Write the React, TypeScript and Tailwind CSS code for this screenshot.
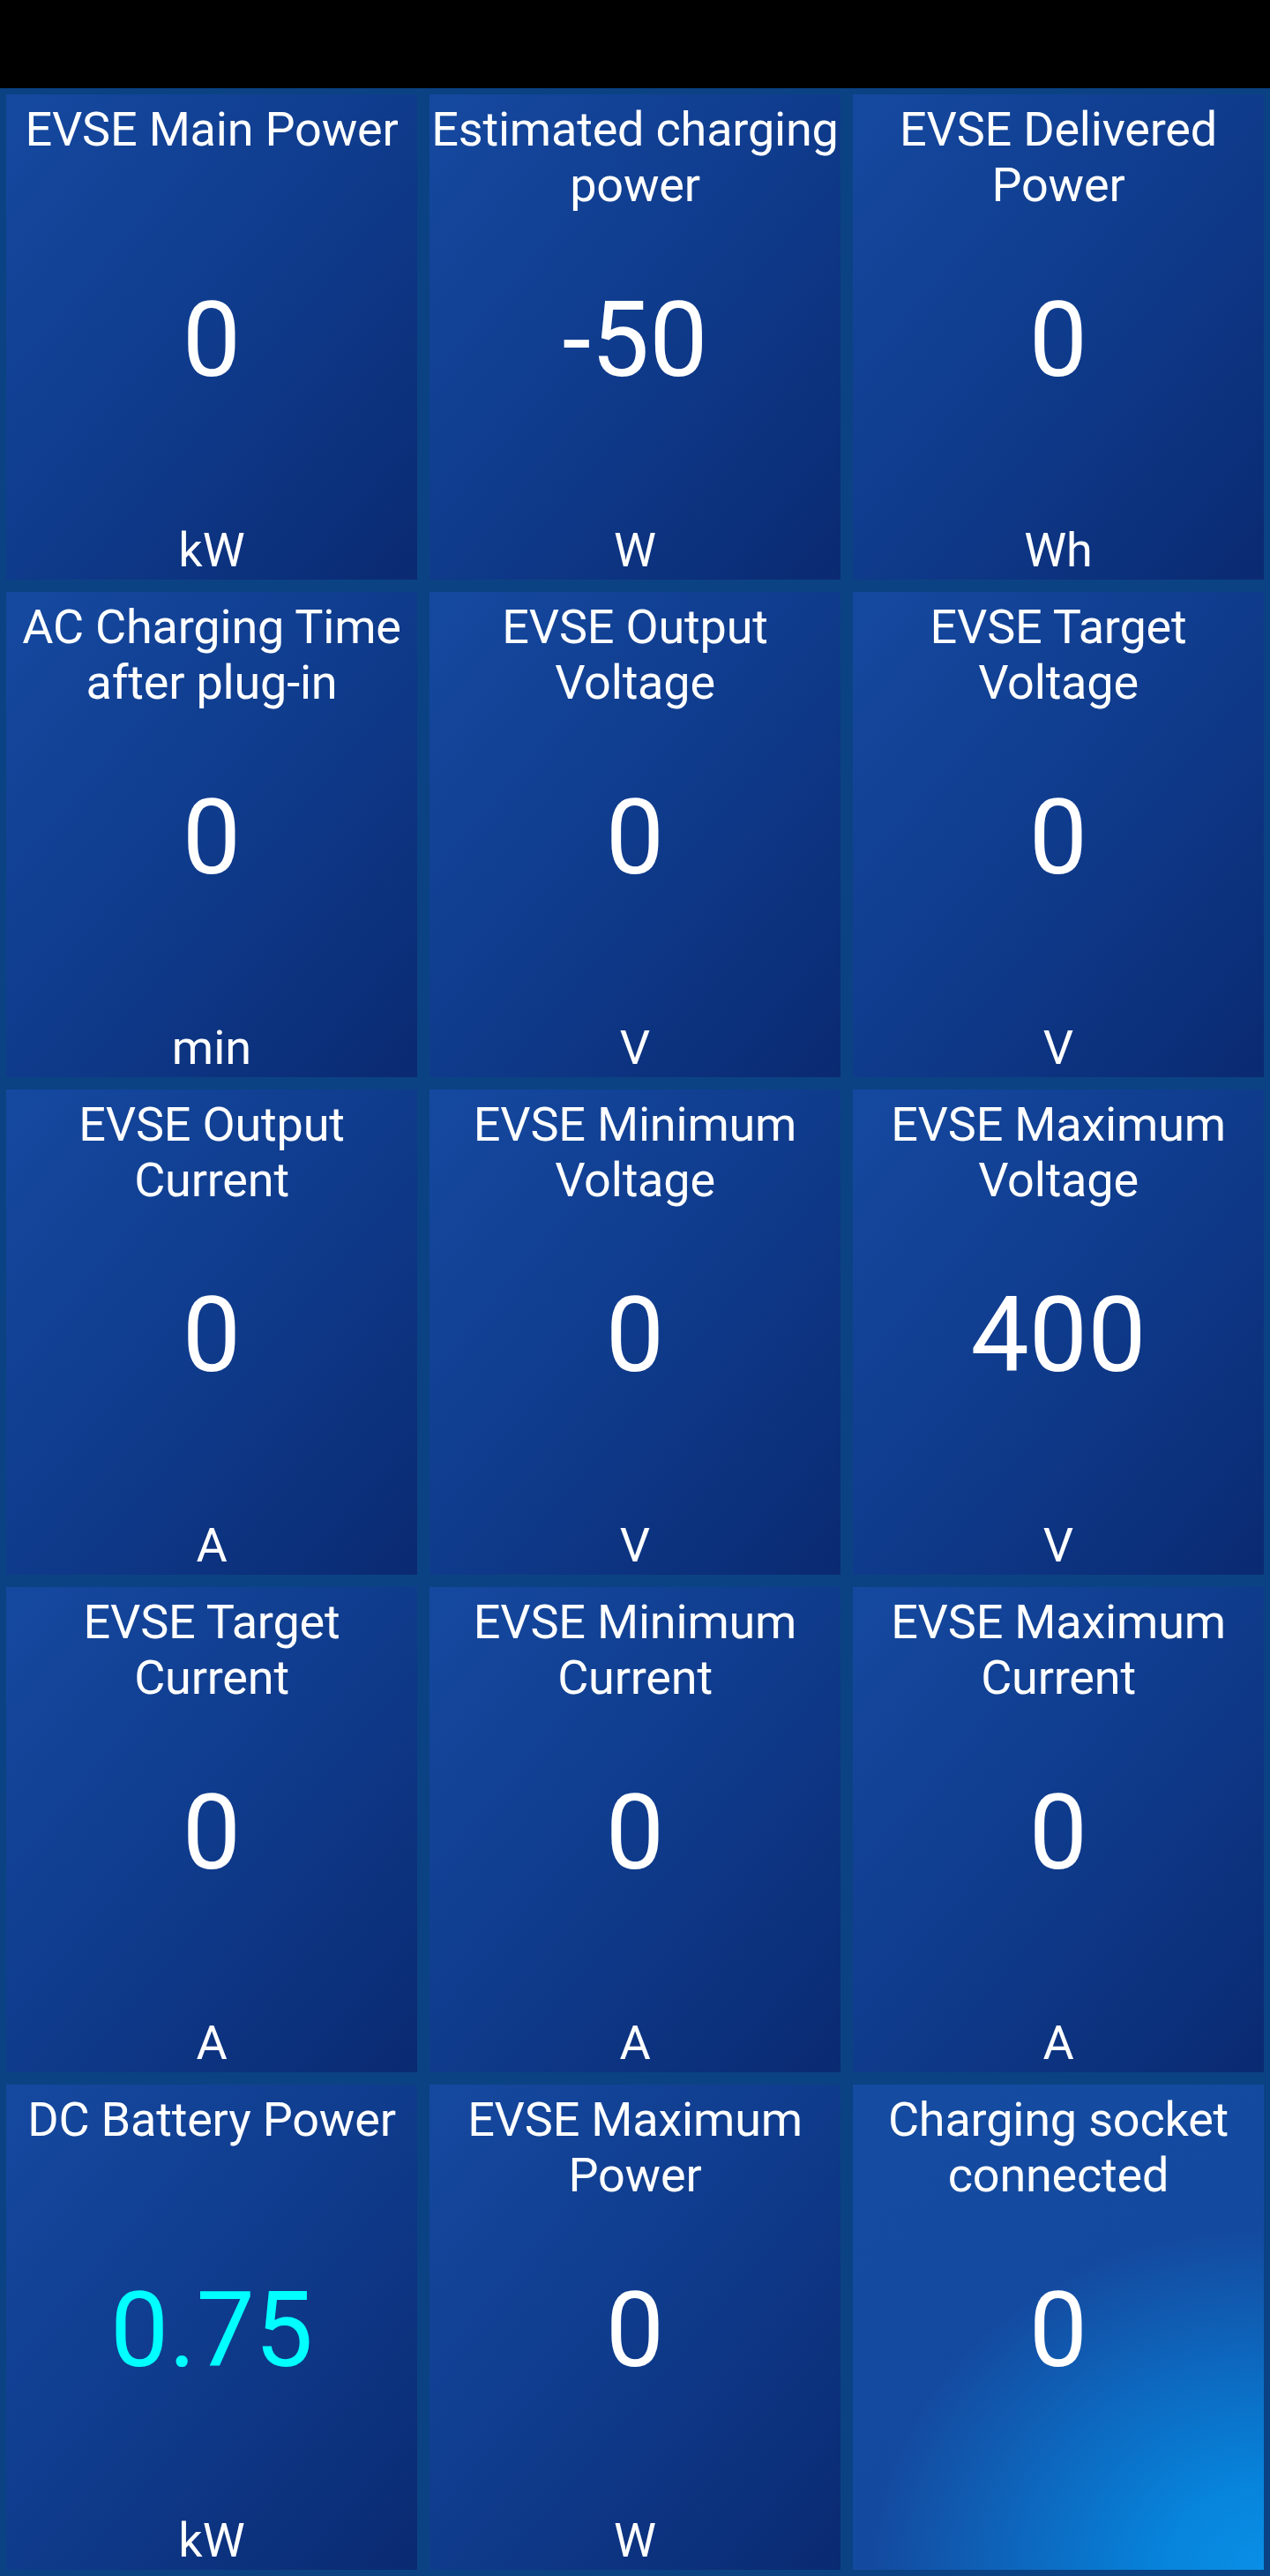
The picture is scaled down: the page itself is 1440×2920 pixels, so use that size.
import React from "react";

type Tile = { title: string; value: string; unit: string; cyan?: boolean; glow?: boolean };

const tiles: Tile[] = [
  { title: "EVSE Main Power", value: "0", unit: "kW" },
  { title: "Estimated charging power", value: "-50", unit: "W" },
  { title: "EVSE Delivered Power", value: "0", unit: "Wh" },
  { title: "AC Charging Time after plug-in", value: "0", unit: "min" },
  { title: "EVSE Output Voltage", value: "0", unit: "V" },
  { title: "EVSE Target Voltage", value: "0", unit: "V" },
  { title: "EVSE Output Current", value: "0", unit: "A" },
  { title: "EVSE Minimum Voltage", value: "0", unit: "V" },
  { title: "EVSE Maximum Voltage", value: "400", unit: "V" },
  { title: "EVSE Target Current", value: "0", unit: "A" },
  { title: "EVSE Minimum Current", value: "0", unit: "A" },
  { title: "EVSE Maximum Current", value: "0", unit: "A" },
  { title: "DC Battery Power", value: "0.75", unit: "kW", cyan: true },
  { title: "EVSE Maximum Power", value: "0", unit: "W" },
  { title: "Charging socket connected", value: "0", unit: "", glow: true },
];

function Card({ t }: { t: Tile }) {
  return (
    <div
      className={
        "grid grid-rows-[1fr_auto_1fr] h-[550px] text-center text-white " +
        (t.glow
          ? "bg-[radial-gradient(ellipse_95%_70%_at_100%_100%,#0a8fe6_0%,#0784dc_25%,rgba(18,74,158,0)_100%),linear-gradient(135deg,#154ba1_0%,#124a9e_100%)]"
          : "bg-linear-to-br from-[#1549a0] via-[#0f3b8c] to-[#0a2a72]")
      }
    >
      <div className="self-start pt-[8px] text-[54px] leading-[63px] tracking-[-0.2px]">{t.title}</div>
      <div
        className={
          "mt-[8px] text-[118px] leading-none " + (t.cyan ? "text-[#00ffff]" : "text-white")
        }
      >
        {t.value}
      </div>
      <div className="self-end pb-[2px] text-[54px] leading-[62px]">{t.unit}</div>
    </div>
  );
}

export default function App() {
  return (
    <div className="w-[1440px] h-[2920px] bg-black" style={{ fontFamily: "Roboto, 'Noto Sans', sans-serif" }}>
      <div className="h-[100px] bg-black" />
      <div className="grid grid-cols-3 gap-[14px] p-[7px] bg-[#0b4283]">
        {tiles.map((t, i) => (
          <Card key={i} t={t} />
        ))}
      </div>
    </div>
  );
}
